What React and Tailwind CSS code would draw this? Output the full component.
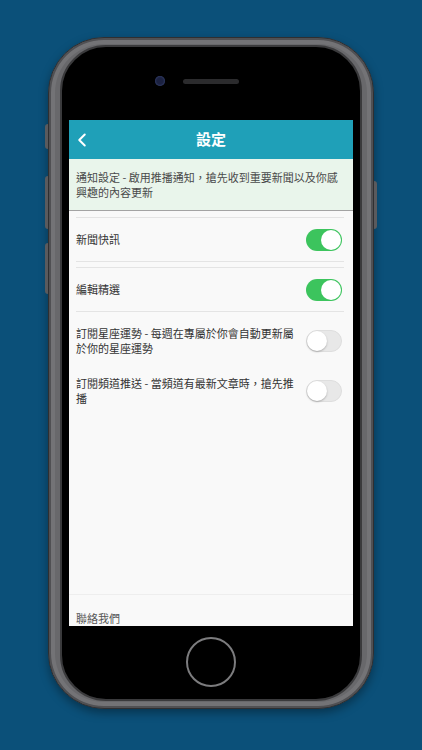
import { ChevronLeft } from 'lucide-react'

const ROWS = [
  { label: '訂閱星座運勢 - 每週在專屬於你會自動更新屬於你的星座運勢', on: false, h: 'h-[54px] pt-[3px]' },
  { label: '訂閱頻道推送 - 當頻道有最新文章時，搶先推播', on: false, h: 'h-[49px]' },
]

function Toggle({ on }) {
  return (
    <div
      className={`w-[36px] h-[22px] rounded-full p-[1px] flex shrink-0 ${
        on ? 'bg-[#3cc45d] justify-end' : 'bg-[#e8e8e8] border border-[#dedede] justify-start'
      }`}
    >
      <div className={`w-[20px] h-[20px] rounded-full bg-white ${on ? '' : 'shadow-[0_1px_2px_rgba(0,0,0,0.25)] -mt-px -ml-px'}`} />
    </div>
  )
}

function Line() {
  return <div className="h-px bg-[#e4e4e4] ml-[7px] mr-[9px]" />
}

function Row({ label, on, h = 'h-[43px]' }) {
  return (
    <div className={`${h} flex items-center gap-[10px] pl-[7px] pr-[11px]`}>
      <p className="flex-1 text-[11px] leading-[15px] text-[#333]">{label}</p>
      <Toggle on={on} />
    </div>
  )
}

function Screen() {
  return (
    <div className="w-[284px] h-[506px] bg-[#f9f9f9] flex flex-col overflow-hidden">
      <div className="h-[39px] bg-[#1fa0b8] flex items-center relative shrink-0">
        <ChevronLeft className="absolute left-[2px] text-white" size={22} strokeWidth={2.2} />
        <h1 className="flex-1 text-center text-white text-[15px] font-bold">設定</h1>
      </div>
      <div className="h-[52px] bg-[#e9f5eb] border-b border-[#a3a3a3] px-[7px] pt-[11px] shrink-0">
        <p className="text-[11px] leading-[15px] text-[#4a4a4a]">
          通知設定 - 啟用推播通知，搶先收到重要新聞以及你感興趣的內容更新
        </p>
      </div>
      <div className="h-[6px] shrink-0" />
      <Line />
      <Row label="新聞快訊" on />
      <Line />
      <div className="h-[5px] shrink-0" />
      <Line />
      <Row label="編輯精選" on />
      <Line />
      {ROWS.map(r => (
        <Row key={r.label} {...r} />
      ))}
      <div className="flex-1" />
      <div className="h-px bg-[#eeeeee]" />
      <div className="h-[31px] px-[7px] pt-[15px] shrink-0">
        <p className="text-[11px] leading-[16px] text-[#555]">聯絡我們</p>
      </div>
    </div>
  )
}

export default function App() {
  return (
    <div
      className="w-[422px] h-[750px] bg-[#0b5079] pt-[37px] flex justify-center"
      style={{ fontFamily: '"Noto Sans CJK TC", "Noto Sans", sans-serif' }}
    >
      <div className="relative w-[326px] h-[672px] rounded-[56px] bg-[#68686b] border border-[#2f2f31] px-[11px] py-[7px] shadow-[inset_0_0_0_2px_#505053,inset_0_0_0_6px_#737376,0_4px_10px_rgba(0,0,0,0.35)]">
        {/* side buttons */}
        <div className="absolute -left-[4px] top-[86px] w-[3px] h-[25px] rounded-l bg-[#5a5a5d]" />
        <div className="absolute -left-[4px] top-[138px] w-[3px] h-[53px] rounded-l bg-[#5a5a5d]" />
        <div className="absolute -left-[4px] top-[205px] w-[3px] h-[51px] rounded-l bg-[#5a5a5d]" />
        <div className="absolute -right-[4px] top-[143px] w-[3px] h-[48px] rounded-r bg-[#5a5a5d]" />

        <div className="h-full rounded-[46px] bg-black border-2 border-[#3a3a3c] flex flex-col items-center">
          <div className="h-[73px] w-full flex justify-center items-start pt-[29px]">
            <div className="flex items-center gap-[18px]">
              <div className="w-[10px] h-[10px] rounded-full bg-[#1b2140] shadow-[inset_0_0_2px_#4a5a90]" />
              <div className="w-[56px] h-[5px] rounded-full bg-[#2b2b2d]" />
              <div className="w-[10px]" />
            </div>
          </div>
          <Screen />
          <div className="mt-[11px] w-[50px] h-[50px] rounded-full border-2 border-[#7c7c7e] bg-black" />
        </div>
      </div>
    </div>
  )
}
